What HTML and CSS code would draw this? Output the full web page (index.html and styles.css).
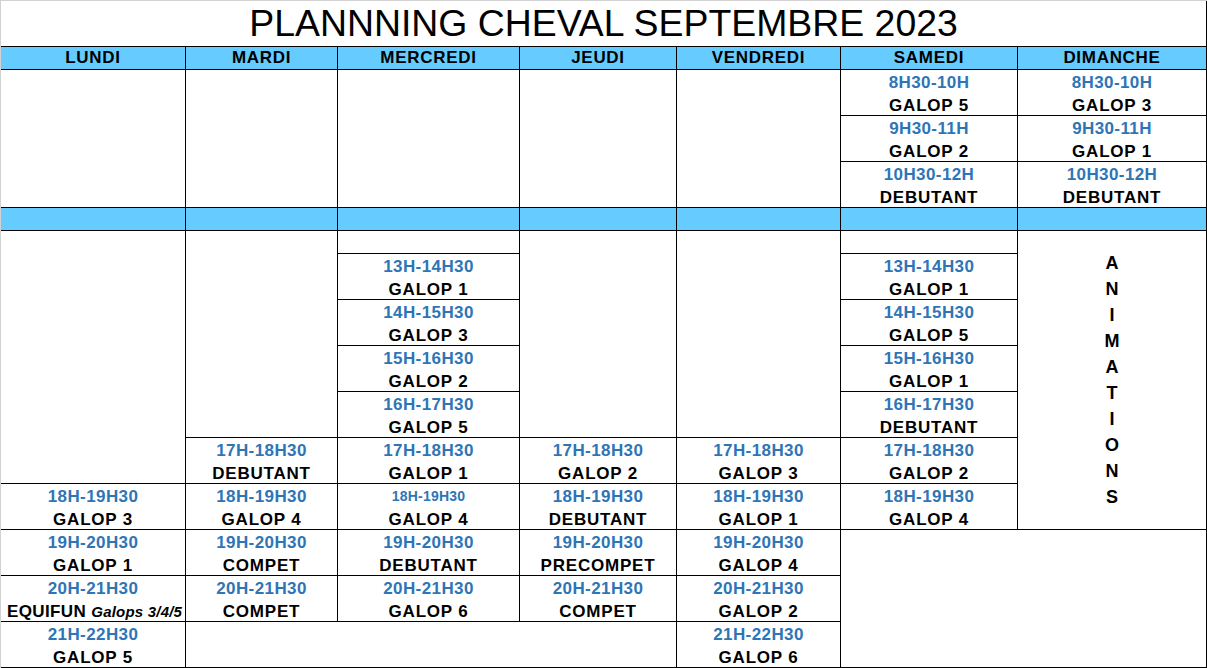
FILE: index.html
```html
<!DOCTYPE html>
<html lang="fr">
<head>
<meta charset="utf-8">
<title>Planning cheval septembre 2023</title>
<link rel="stylesheet" href="styles.css">
</head>
<body>
<div class="sheet">
  <div class="cell title">PLANNNING CHEVAL SEPTEMBRE 2023</div>

  <div class="cell day">LUNDI</div>
  <div class="cell day">MARDI</div>
  <div class="cell day">MERCREDI</div>
  <div class="cell day">JEUDI</div>
  <div class="cell day">VENDREDI</div>
  <div class="cell day">SAMEDI</div>
  <div class="cell day">DIMANCHE</div>

  <!-- matin -->
  <div class="cell r6"></div>
  <div class="cell r6"></div>
  <div class="cell r6"></div>
  <div class="cell r6"></div>
  <div class="cell r6"></div>
  <div class="cell slot"><span class="t">8H30-10H</span><span class="n">GALOP 5</span></div>
  <div class="cell slot"><span class="t">8H30-10H</span><span class="n">GALOP 3</span></div>
  <div class="cell slot"><span class="t">9H30-11H</span><span class="n">GALOP 2</span></div>
  <div class="cell slot"><span class="t">9H30-11H</span><span class="n">GALOP 1</span></div>
  <div class="cell slot"><span class="t">10H30-12H</span><span class="n">DEBUTANT</span></div>
  <div class="cell slot"><span class="t">10H30-12H</span><span class="n">DEBUTANT</span></div>

  <!-- séparation -->
  <div class="cell blue"></div>
  <div class="cell blue"></div>
  <div class="cell blue"></div>
  <div class="cell blue"></div>
  <div class="cell blue"></div>
  <div class="cell blue"></div>
  <div class="cell blue"></div>

  <!-- après-midi -->
  <div class="cell r11"></div>
  <div class="cell r9"></div>
  <div class="cell"></div>
  <div class="cell r9"></div>
  <div class="cell r9"></div>
  <div class="cell"></div>
  <div class="cell r13 anim"><span class="vert">ANIMATIONS</span></div>

  <div class="cell slot"><span class="t">13H-14H30</span><span class="n">GALOP 1</span></div>
  <div class="cell slot"><span class="t">13H-14H30</span><span class="n">GALOP 1</span></div>

  <div class="cell slot"><span class="t">14H-15H30</span><span class="n">GALOP 3</span></div>
  <div class="cell slot"><span class="t">14H-15H30</span><span class="n">GALOP 5</span></div>

  <div class="cell slot"><span class="t">15H-16H30</span><span class="n">GALOP 2</span></div>
  <div class="cell slot"><span class="t">15H-16H30</span><span class="n">GALOP 1</span></div>

  <div class="cell slot"><span class="t">16H-17H30</span><span class="n">GALOP 5</span></div>
  <div class="cell slot"><span class="t">16H-17H30</span><span class="n">DEBUTANT</span></div>

  <div class="cell slot"><span class="t">17H-18H30</span><span class="n">DEBUTANT</span></div>
  <div class="cell slot"><span class="t">17H-18H30</span><span class="n">GALOP 1</span></div>
  <div class="cell slot"><span class="t">17H-18H30</span><span class="n">GALOP 2</span></div>
  <div class="cell slot"><span class="t">17H-18H30</span><span class="n">GALOP 3</span></div>
  <div class="cell slot"><span class="t">17H-18H30</span><span class="n">GALOP 2</span></div>

  <!-- soirée -->
  <div class="cell slot"><span class="t">18H-19H30</span><span class="n">GALOP 3</span></div>
  <div class="cell slot"><span class="t">18H-19H30</span><span class="n">GALOP 4</span></div>
  <div class="cell slot"><span class="t sm">18H-19H30</span><span class="n">GALOP 4</span></div>
  <div class="cell slot"><span class="t">18H-19H30</span><span class="n">DEBUTANT</span></div>
  <div class="cell slot"><span class="t">18H-19H30</span><span class="n">GALOP 1</span></div>
  <div class="cell slot"><span class="t">18H-19H30</span><span class="n">GALOP 4</span></div>

  <div class="cell slot"><span class="t">19H-20H30</span><span class="n">GALOP 1</span></div>
  <div class="cell slot"><span class="t">19H-20H30</span><span class="n">COMPET</span></div>
  <div class="cell slot"><span class="t">19H-20H30</span><span class="n">DEBUTANT</span></div>
  <div class="cell slot"><span class="t">19H-20H30</span><span class="n">PRECOMPET</span></div>
  <div class="cell slot"><span class="t">19H-20H30</span><span class="n">GALOP 4</span></div>
  <div class="blank-wide"></div>

  <div class="cell slot"><span class="t">20H-21H30</span><span class="n tight">EQUIFUN <em class="note">Galops 3/4/5</em></span></div>
  <div class="cell slot"><span class="t">20H-21H30</span><span class="n">COMPET</span></div>
  <div class="cell slot"><span class="t">20H-21H30</span><span class="n">GALOP 6</span></div>
  <div class="cell slot"><span class="t">20H-21H30</span><span class="n">COMPET</span></div>
  <div class="cell slot"><span class="t">20H-21H30</span><span class="n">GALOP 2</span></div>

  <div class="cell slot"><span class="t">21H-22H30</span><span class="n">GALOP 5</span></div>
  <div class="cell blank-mid"></div>
  <div class="cell slot"><span class="t">21H-22H30</span><span class="n">GALOP 6</span></div>
</div>
</body>
</html>
```

FILE: styles.css
```css
html, body {
  margin: 0;
  padding: 0;
  background: #ffffff;
}

body {
  font-family: "Liberation Sans", Arial, sans-serif;
  color: #000000;
}

.sheet {
  display: grid;
  width: 1207px;
  box-sizing: border-box;
  grid-template-columns: 185px 152px 182px 157px 164px 177px 189px;
  grid-template-rows: 46px;
  grid-auto-rows: 23px;
  border-top: 1px solid #d2d2d2;
  border-left: 1px solid #d2d2d2;
}

.cell {
  box-sizing: border-box;
  border-right: 1px solid #000000;
  border-bottom: 1px solid #000000;
  text-align: center;
  font-weight: bold;
  font-size: 17px;
  line-height: 23px;
  white-space: nowrap;
  overflow: visible;
}

.title {
  grid-column: span 7;
  font-weight: normal;
  font-size: 37.4px;
  line-height: 45px;
  color: #000000;
}

.day {
  background: #66ccff;
  line-height: 22px;
  letter-spacing: 0.7px;
}

.blue {
  background: #66ccff;
}

.r6 { grid-row: span 6; }
.r9 { grid-row: span 9; }
.r11 { grid-row: span 11; }
.r13 { grid-row: span 13; }

.slot {
  grid-row: span 2;
  padding-top: 1px;
}

.slot .t,
.slot .n {
  display: block;
  height: 23px;
}

.t {
  color: #2e75b6;
  letter-spacing: 0.4px;
}

.t.sm {
  font-size: 14px;
  letter-spacing: 0.2px;
}

.n {
  color: #000000;
  letter-spacing: 0.8px;
}

.n.tight {
  letter-spacing: 0.4px;
  padding-left: 3px;
}

.note {
  font-style: italic;
  font-size: 15px;
  letter-spacing: 0.2px;
}

.anim {
  display: flex;
  align-items: center;
  justify-content: center;
}

.vert {
  writing-mode: vertical-rl;
  text-orientation: upright;
  letter-spacing: 6px;
  font-size: 18px;
  line-height: 20px;
  padding-top: 6px;
}

.blank-wide {
  grid-column: span 2;
  grid-row: span 6;
  box-sizing: border-box;
  border-right: 1px solid #000000;
  border-bottom: 1px solid #000000;
}

.blank-mid {
  grid-column: span 3;
  grid-row: span 2;
}
```
